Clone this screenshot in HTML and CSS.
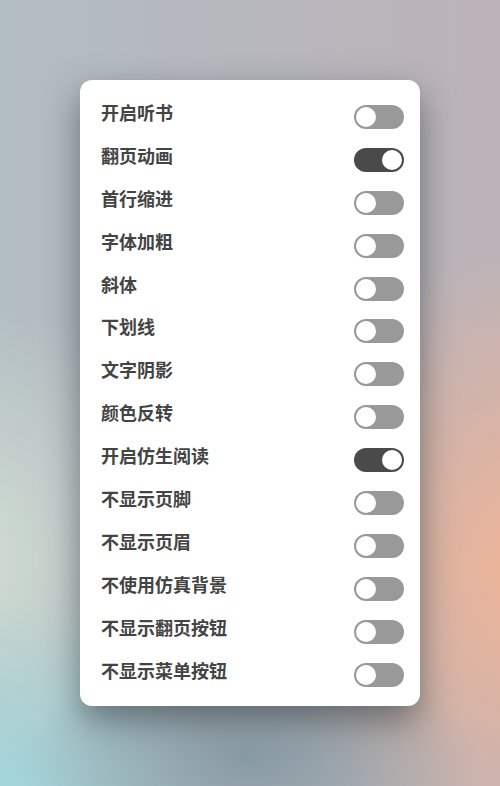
FILE: index.html
```html
<!DOCTYPE html>
<html lang="zh-CN">
<head>
<meta charset="utf-8">
<link rel="stylesheet" href="styles.css">
</head>
<body>
<div class="stage">
  <div class="card">
    <div class="row"><span class="label">开启听书</span><span class="switch"></span></div>
    <div class="row"><span class="label">翻页动画</span><span class="switch on"></span></div>
    <div class="row"><span class="label">首行缩进</span><span class="switch"></span></div>
    <div class="row"><span class="label">字体加粗</span><span class="switch"></span></div>
    <div class="row"><span class="label">斜体</span><span class="switch"></span></div>
    <div class="row"><span class="label">下划线</span><span class="switch"></span></div>
    <div class="row"><span class="label">文字阴影</span><span class="switch"></span></div>
    <div class="row"><span class="label">颜色反转</span><span class="switch"></span></div>
    <div class="row"><span class="label">开启仿生阅读</span><span class="switch on"></span></div>
    <div class="row"><span class="label">不显示页脚</span><span class="switch"></span></div>
    <div class="row"><span class="label">不显示页眉</span><span class="switch"></span></div>
    <div class="row"><span class="label">不使用仿真背景</span><span class="switch"></span></div>
    <div class="row"><span class="label">不显示翻页按钮</span><span class="switch"></span></div>
    <div class="row"><span class="label">不显示菜单按钮</span><span class="switch"></span></div>
  </div>
</div>
</body>
</html>
```
FILE: styles.css
```css
html, body {
  margin: 0;
  padding: 0;
}
body {
  width: 500px;
  height: 786px;
  overflow: hidden;
  font-family: "Noto Sans CJK SC", "Noto Sans", sans-serif;
}
.stage {
  width: 500px;
  height: 786px;
  box-sizing: border-box;
  padding-top: 80px;
  padding-left: 80px;
  background:
    radial-gradient(ellipse 230px 110px at 250px 760px, rgba(120,145,155,0.75), rgba(120,145,155,0) 100%),
    radial-gradient(ellipse 260px 320px at 530px 570px, rgba(240,180,150,1), rgba(240,180,150,0) 100%),
    radial-gradient(ellipse 230px 200px at 0px 800px, rgba(160,215,220,1), rgba(160,215,220,0) 100%),
    radial-gradient(ellipse 200px 260px at -20px 560px, rgba(210,222,212,0.95), rgba(210,222,212,0) 100%),
    linear-gradient(90deg, #b2bdc2 0%, #b6b7bd 50%, #bcb3b8 100%);
}
.card {
  width: 340px;
  height: 626px;
  box-sizing: border-box;
  background: #fff;
  border-radius: 12px;
  padding: 20px 16px 0 21px;
  box-shadow: 0 14px 34px rgba(30,40,45,0.5);
}
.row {
  display: flex;
  justify-content: space-between;
  align-items: flex-start;
  height: 42.9px;
}
.label {
  font-size: 18px;
  line-height: 24px;
  font-weight: 700;
  color: #444;
}
.switch {
  position: relative;
  margin-top: 5px;
  width: 50px;
  height: 24px;
  border-radius: 12px;
  background: #999;
  box-sizing: border-box;
}
.switch::after {
  content: "";
  position: absolute;
  top: 2px;
  left: 2px;
  width: 20px;
  height: 20px;
  border-radius: 50%;
  background: #fff;
}
.switch.on {
  background: #4a4a4a;
}
.switch.on::after {
  left: 28px;
}
```
